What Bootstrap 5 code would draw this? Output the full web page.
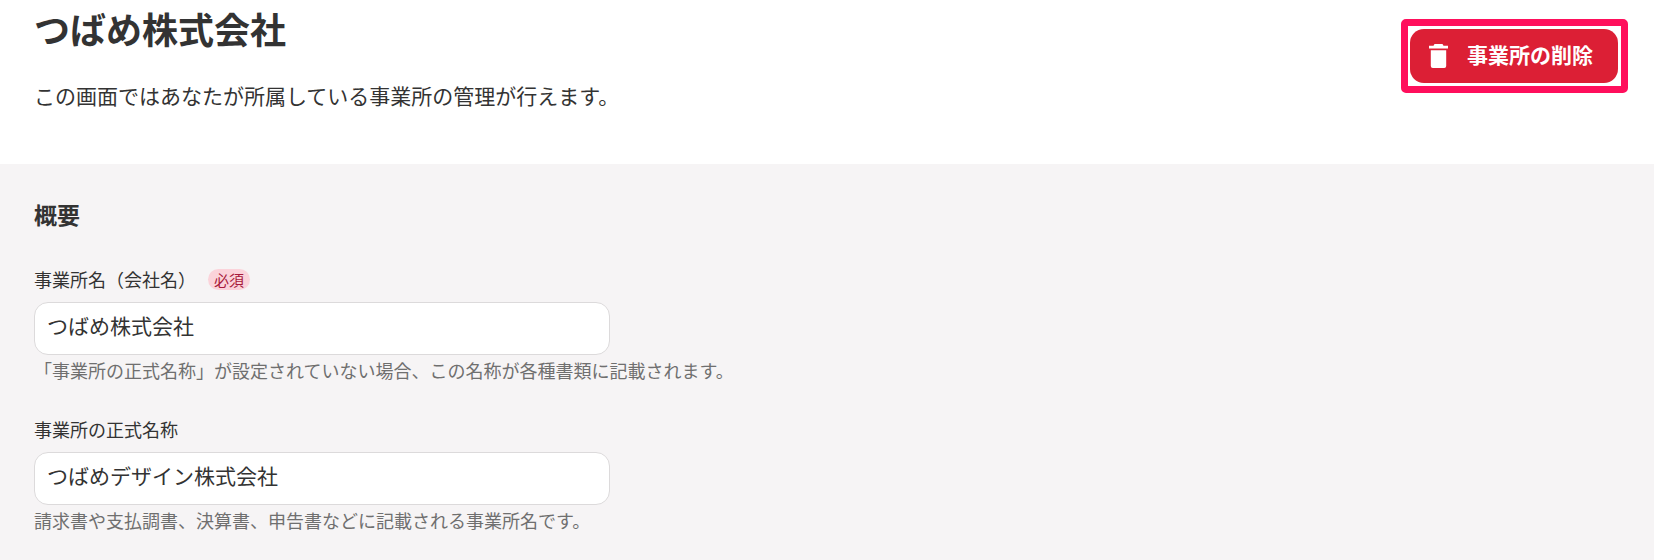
<!DOCTYPE html>
<html lang="ja">
<head>
<meta charset="utf-8">
<title>事業所の管理</title>
<link href="https://cdn.jsdelivr.net/npm/bootstrap@5.3.0/dist/css/bootstrap.min.css" rel="stylesheet">
<style>
html,body{height:560px;overflow:hidden;margin:0}
body{font-family:"Noto Sans CJK JP","Liberation Sans",sans-serif;color:#333;background:#f6f4f5}
.head-zone{height:164px;background:#fff;padding:0 26px 0 34px}
.page-title{font-size:36px;font-weight:700;line-height:50px;margin:3px 0 0;color:#333}
.page-desc{font-size:21px;line-height:30px;margin:27px 0 0;color:#333}
.mark-frame{border:7px solid #ff0f5c;border-radius:5px;padding:3px 3px 3px 2px;margin-top:19px}
.del-btn{background:#dc1f35;border:0;border-radius:14px;color:#fff;font-weight:700;font-size:21px;line-height:30px;width:208px;height:54px;gap:19px;padding:0 0 0 19px}
.del-btn:hover{background:#dc1f35;color:#fff}
.del-text{margin-bottom:5px}
.body-zone{padding:35px 34px 0}
.sec-title{font-size:23px;font-weight:700;line-height:30px;margin:0 0 38px}
.fld-label{font-size:18px;line-height:24px;margin:0 0 11px;color:#333}
.req-pill{background:#fbd3da;color:#a81a3c;font-size:15px;line-height:21px;border-radius:11px;padding:0 6px;margin-left:12px;font-weight:400}
.fld-input{width:576px;height:53px;border:1px solid #dcdadb;border-radius:14px;font-size:21px;color:#333;padding:0 12px 8px;background:#fff}
.fld-help{font-size:18px;line-height:24px;color:#6f6f6f;margin:3px 0 0}
.fld-block{margin-bottom:35px}
</style>
</head>
<body>
<div class="head-zone d-flex justify-content-between align-items-start">
  <div>
    <h1 class="page-title">つばめ株式会社</h1>
    <p class="page-desc">この画面ではあなたが所属している事業所の管理が行えます。</p>
  </div>
  <div class="mark-frame">
    <button type="button" class="btn del-btn d-flex align-items-center">
      <svg width="19" height="24" viewBox="0 0 19 24" aria-hidden="true"><path fill="#fff" d="M5.500 0h8l1 1.800H19v2.700H0V1.800h4.500zM1.800 6.200h15.400V22a2 2 0 0 1-2 2H3.800a2 2 0 0 1-2-2z"/></svg>
      <span class="del-text">事業所の削除</span>
    </button>
  </div>
</div>
<div class="body-zone">
  <h2 class="sec-title">概要</h2>
  <div class="fld-block">
    <label class="fld-label d-flex align-items-center" for="f1">事業所名（会社名）<span class="req-pill">必須</span></label>
    <input id="f1" class="form-control fld-input" type="text" value="つばめ株式会社">
    <p class="fld-help">「事業所の正式名称」が設定されていない場合、この名称が各種書類に記載されます。</p>
  </div>
  <div class="fld-block">
    <label class="fld-label d-block" for="f2">事業所の正式名称</label>
    <input id="f2" class="form-control fld-input" type="text" value="つばめデザイン株式会社">
    <p class="fld-help">請求書や支払調書、決算書、申告書などに記載される事業所名です。</p>
  </div>
</div>
</body>
</html>
